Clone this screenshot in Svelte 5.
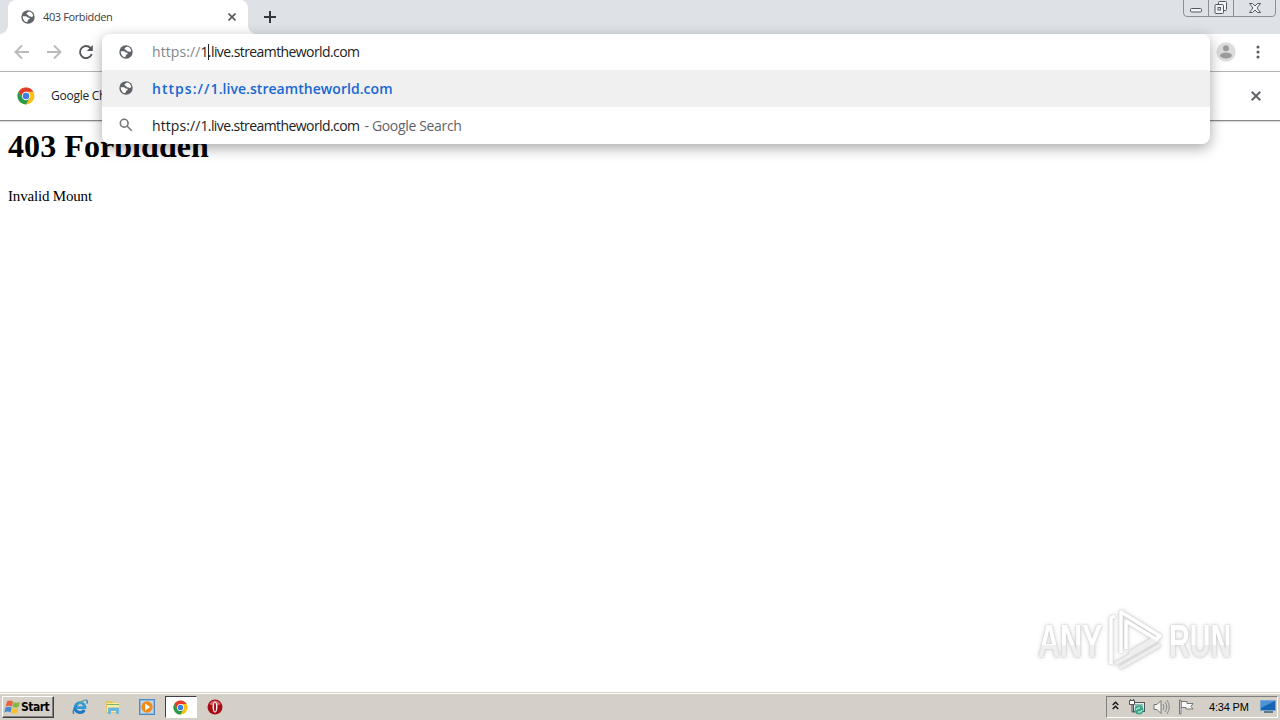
<script lang="ts">
  let url = '1.live.streamtheworld.com';
  let tabTitle = '403 Forbidden';
  let clock = '4:34 PM';
</script>

{#snippet globe()}
  <svg class="globe" viewBox="0 0 14 14">
    <circle cx="7" cy="7" r="6.7" fill="#5f6368" />
    <path d="M7.600 1.700 5.600 3.200l.1 1.300 1.500.3.600 1.500h1.400l1 .8 1.700-.5.3-1.300c-.5-1.700-1.600-3-3.200-3.600zM1.700 6.200l3.500.1 1.500 1.100 1.700.3.400 1.200-1.700.9-.4 1.800-1.600.6C3.200 11.300 1.700 9 1.700 6.200z" fill="#fff" />
  </svg>
{/snippet}

{#snippet chrome()}
  <svg class="chrome" viewBox="0 0 18 18">
    <circle cx="9" cy="9" r="8.500" fill="#fbc116" />
    <path d="M1.600 4.800A8.500 8.500 0 0 1 16.400 4.800H9L5.400 11.100z" fill="#e33b2e" />
    <path d="M1.600 4.800A8.500 8.500 0 0 0 9 17.500l3.600-6.400H5.400z" fill="#269b4b" />
    <circle cx="9" cy="9" r="4.200" fill="#fff" />
    <circle cx="9" cy="9" r="3.300" fill="#3f7de0" />
  </svg>
{/snippet}

<div class="screen">
  <header class="tabstrip">
    <div class="tab">
      {@render globe()}
      <span class="tab-title">{tabTitle}</span>
      <svg class="tab-close" viewBox="0 0 8 8"><path d="m.5.5 7 7m0-7-7 7" /></svg>
    </div>
    <svg class="new-tab" viewBox="0 0 12 12"><path d="M6 0v12M0 6h12" /></svg>
    <div class="window-buttons">
      <span><svg width="14" height="14" viewBox="0 0 14 14"><rect x="1.500" y="7.500" width="11" height="3.500" rx="1" /></svg></span>
      <span><svg width="14" height="14" viewBox="0 0 14 14"><path d="M4.500 3.500v-2q0-1 1-1h6q1 0 1 1v7q0 1-1 1h-2" /><rect x="1" y="3.500" width="8.500" height="9" rx="1" /><rect x="4" y="6.500" width="2.500" height="2.500" /></svg></span>
      <span><svg width="14" height="14" viewBox="0 0 14 14"><path d="M1.500 2.500h3L7 5l2.500-2.500h3L9 7l3.500 4.500h-3L7 9l-2.500 2.500h-3L5 7z" /></svg></span>
    </div>
  </header>

  <nav class="toolbar">
    <svg class="nav dim" viewBox="0 0 16 16"><path d="M15 8H2M8 1.500 1.500 8 8 14.500" /></svg>
    <svg class="nav dim" viewBox="0 0 16 16"><path d="M1 8h13M8 1.500 14.500 8 8 14.500" /></svg>
    <svg class="nav" viewBox="0 0 16 16"><path d="M13.700 10A6 6 0 1 1 12.600 4.200" /><path d="M14.800 1v6H8.800z" class="solid" /></svg>
    <div class="toolbar-end">
      <svg class="avatar" viewBox="0 0 20 20">
        <circle cx="10" cy="10" r="9.700" fill="#dcdcdc" />
        <circle cx="10" cy="6.200" r="3" fill="#9b9b9b" />
        <ellipse cx="10" cy="13.500" rx="6" ry="2.900" fill="#9b9b9b" />
      </svg>
      <svg class="dots" viewBox="0 0 4 14"><circle cx="2" cy="2" r="1.500" /><circle cx="2" cy="7" r="1.500" /><circle cx="2" cy="12" r="1.500" /></svg>
    </div>
  </nav>

  <div class="infobar">
    {@render chrome()}
    <span>Google Chrome</span>
    <svg class="info-close" viewBox="0 0 10 10"><path d="m.7.700 8.600 8.600m0-8.600L.7 9.300" /></svg>
  </div>

  <main>
    <h1>403 Forbidden</h1>
    <p>Invalid Mount</p>
  </main>

  <footer class="taskbar">
    <div class="start">
      <svg width="17" height="17" viewBox="0 0 17 16">
        <path d="M3 2q3-2 6 0L8 7Q5 5.500 1.700 7z" fill="#e8623a" />
        <path d="M9.700 2.400q3 1.500 6.300 0L14.600 7.500q-3 1.400-6 0z" fill="#85b840" />
        <path d="M1.500 8q3-1.500 6.200 0l-1.200 5q-3-1.800-6.200 0z" fill="#4489cf" />
        <path d="M8.400 8.400q3 1.500 6 0L13 13.500q-3 1.500-6 0z" fill="#f6bf34" />
      </svg>
      <b>Start</b>
    </div>
    <div class="launch">
      <span class="app"><svg width="16" height="16" viewBox="0 0 16 16">
        <path d="M3 8.700a5 5 0 0 0 9.300 2.300" fill="none" stroke="#1c78c8" stroke-width="3" />
        <path d="M3 8.700a5 5 0 0 1 10 0z" fill="none" stroke="#2b9be0" stroke-width="2.800" />
        <path d="M2 15Q-.5 12.500 4.500 7 11 .2 14.500 1.200q1.500.800.2 3.600" fill="none" stroke="#2f7fc0" stroke-width="1.300" />
        <path d="M5 6.500Q11 .8 14 1.500" fill="none" stroke="#9bc84a" stroke-width=".8" />
      </svg></span>
      <span class="app"><svg width="16" height="16" viewBox="0 0 16 16">
        <path d="M1 2h6l1 1.500h6V14H1z" fill="#e9c65c" /><path d="M2 4h12v9H2z" fill="#fbec9e" />
        <path d="M2 5.500h12" stroke="#72b576" /><path d="M3 15V9.500q0-1 1-1h9q1 0 1 1V15h-3v-3H6v3z" fill="#69b7dd" />
      </svg></span>
      <span class="app"><svg width="16" height="16" viewBox="0 0 16 16">
        <rect x=".5" y=".5" width="15" height="15" fill="#8ebbe1" stroke="#4d89c4" /><path d="M2 2h12v12H2z" fill="#c4d8e6" />
        <circle cx="8" cy="8" r="5.700" fill="#f18a18" /><path d="m6.200 4.500 5 3.500-5 3.500z" fill="#fff" />
      </svg></span>
      <span class="app active">{@render chrome()}</span>
      <span class="app"><svg width="16" height="16" viewBox="0 0 16 16">
        <circle cx="8" cy="8" r="7.500" fill="#a50c14" /><path d="M2 5q6-7 12 0Q8 8 2 5z" fill="#d66565" />
        <ellipse cx="8" cy="8" rx="2.500" ry="5.500" fill="#f6eded" /><ellipse cx="8" cy="8" rx="1" ry="4.500" fill="#a50c14" />
      </svg></span>
    </div>
    <div class="tray">
      <svg class="chevrons" width="7" height="9" viewBox="0 0 7 9"><path d="m.7 4 2.800-2.800L6.300 4M.7 8l2.800-2.800L6.300 8" fill="none" stroke="#111" stroke-width="1.400" /></svg>
      <svg class="network" width="16" height="16" viewBox="0 0 16 16">
        <rect x="4.500" y="3.500" width="11" height="9" fill="#e5eeee" stroke="#555" /><path d="M6 5h8v6H6z" fill="#8bb9b4" />
        <path d="M.5 1.500h5v4h-5z" fill="#fff" stroke="#555" /><path d="M1.500 0v2m3-2v2M3 5.500V13h3" fill="none" stroke="#555" />
        <circle cx="10" cy="11" r="4.500" fill="#39a88c" /><path d="M7 11q1-3 4-2m2 2q-1 3-4 2" stroke="#e0fff2" fill="none" />
      </svg>
      <svg width="17" height="16" viewBox="0 0 17 16">
        <path d="M1 5.500h3l4-4v13l-4-4H1z" fill="#f4f4f1" stroke="#777" />
        <path d="M10 5q2 3 0 6m2-8q3.500 5 0 10m2-12q4.500 7 0 14" fill="none" stroke="#888" />
      </svg>
      <svg width="16" height="16" viewBox="0 0 16 16"><path d="M3 2.500h6v2h6l-2 3 2 2.500H8V8.500H3z" fill="#f9f9f7" stroke="#777" /><path d="M1.500 1v14h1.500V1z" fill="#fff" stroke="#777" /></svg>
      <time>{clock}</time>
      <svg class="desktop" width="16" height="14" viewBox="0 0 16 14"><path d="M.5.500h15v10H.5z" fill="#1764b5" stroke="#79a7d5" /><path d="M1 1h14L1 8z" fill="#4c94d6" /><path d="M4 11h9v2H4z" fill="#64788a" /></svg>
    </div>
  </footer>

  <section class="omnibox">
    <div class="row input">
      {@render globe()}
      <div class="address"><span class="scheme">https://</span>1<i class="caret"></i>{url.slice(1)}</div>
    </div>
    <div class="row selected">
      {@render globe()}
      <b><span class="prefix">https://</span>{url}</b>
    </div>
    <div class="row search">
      <svg class="magnifier" viewBox="0 0 14 14"><circle cx="5.200" cy="5.200" r="3.900" /><path d="m8.200 8.200 4.600 4.600" /></svg>
      <span><span class="prefix">https://</span>{url}</span><span class="hint">- Google Search</span>
    </div>
  </section>

  <div class="watermark">
    <span>ANY</span>
    <svg width="57" height="62" viewBox="0 0 57 62">
      <path class="shade" d="M8 55l44-25M13 59l40-23M22 44l24-14" />
      <path d="M4 55V9l4-2M14 44V3l39 24-4 3-30-18v28" />
    </svg>
    <span class="run">RUN</span>
  </div>
</div>

<style>
  :global(body) { background: #fff; overflow: hidden; }
  .screen {
    position: relative;
    width: 1280px; height: 720px;
    display: flex; flex-direction: column;
    overflow: hidden;
    font-family: 'Open Sans', 'Noto Sans', sans-serif;
    color: #202124;
  }
  svg { display: block; flex-shrink: 0; }
  .globe { width: 14px; height: 14px; }
  .chrome { width: 18px; height: 18px; }

  .tabstrip { height: 34px; display: flex; align-items: flex-start; background: #dee1e6; }
  .tab {
    position: relative;
    width: 240px; height: 34px; margin-left: 8px; padding: 0 12px 0 13px;
    display: flex; align-items: center;
    box-sizing: border-box;
    background: #fff; border-radius: 8px 8px 0 0;
  }
  .tab::before, .tab::after { content: ''; position: absolute; bottom: 0; width: 8px; height: 8px; }
  .tab::before { left: -8px; background: radial-gradient(circle at 0 0, transparent 7.500px, #fff 8px); }
  .tab::after { right: -8px; background: radial-gradient(circle at 100% 0, transparent 7.500px, #fff 8px); }
  .tab-title { margin: 0 0 2px 8px; font-size: 11px; letter-spacing: -.38px; white-space: nowrap; color: #3c4043; }
  .tab-close { width: 8px; height: 8px; margin-left: auto; stroke: #55585c; stroke-width: 1.600; }
  .new-tab { width: 12px; height: 12px; margin: 11px 0 0 16px; stroke: #35383c; stroke-width: 2; }
  .window-buttons {
    height: 16px; margin: -1px 4px 0 auto;
    display: flex;
    border: 1px solid #8b9098; border-radius: 0 0 4px 4px;
  }
  .window-buttons span { width: 24px; display: flex; align-items: center; justify-content: center; border-right: 1px solid #8b9098; }
  .window-buttons span:last-child { width: 41px; border: 0; }
  .window-buttons svg { fill: #f2f4f7; stroke: #535860; stroke-width: 1; }

  .toolbar { height: 36px; padding: 0 20px 1px 14px; display: flex; align-items: center; gap: 16px; border-bottom: 1px solid #b3b3b3; }
  .nav { width: 16px; height: 16px; fill: none; stroke: #55585c; stroke-width: 1.900; }
  .dim { stroke: #b8babc; }
  .solid { fill: #55585c; stroke: none; }
  .toolbar-end { margin-left: auto; display: flex; align-items: center; gap: 20px; }
  .avatar { width: 20px; height: 20px; }
  .dots { width: 4px; height: 14px; fill: #55585c; }

  .infobar {
    height: 49px; padding: 0 19px 0 17px;
    display: flex; align-items: center;
    box-sizing: border-box;
    border-bottom: 1px solid #898989; box-shadow: 0 1px 1px #ddd;
    font-size: 12px; letter-spacing: -.25px;
  }
  .infobar span { margin: 0 0 1px 16px; }
  .info-close { width: 10px; height: 10px; margin-left: auto; stroke: #5f6368; stroke-width: 2; }

  main { flex: 1; padding: 0 8px; font-family: 'Liberation Serif', serif; color: #000; }
  h1 { margin: 7px 0 0; font-size: 32px; line-height: 37px; letter-spacing: .07px; }
  p { margin: 22px 0 0; font-size: 15px; line-height: 18px; letter-spacing: -.18px; }

  .taskbar {
    height: 28px; padding: 3px 2px 2px;
    display: flex; align-items: stretch;
    box-sizing: border-box;
    background: #d4d0c8; border-top: 1px solid #d4d0c8; box-shadow: inset 0 1px #fff;
  }
  .start {
    width: 52px; padding-left: 1px;
    display: flex; align-items: center;
    box-sizing: border-box;
    border: 1px solid; border-color: #fff #404040 #404040 #fff;
    box-shadow: inset -1px -1px #808080;
    color: #000; font: 700 12px 'DejaVu Sans Condensed', sans-serif;
  }
  .start b { letter-spacing: -.5px; }
  .launch { margin-left: 9px; display: flex; }
  .app { width: 33.600px; display: flex; align-items: center; justify-content: center; }
  .app.active {
    width: 32px; margin: 0 1px;
    box-sizing: border-box;
    border: 1px solid; border-color: #404040 #fff #fff #404040;
    background: #fff;
  }
  .app .chrome { width: 15px; height: 15px; }
  .tray {
    width: 172px; margin-left: auto; padding: 0 1px 0 5px;
    display: flex; align-items: center; gap: 8px;
    box-sizing: border-box;
    border: 1px solid; border-color: #808080 #fff #fff #808080;
    color: #000; font: 11px 'Liberation Sans', sans-serif;
  }
  .chevrons { margin-bottom: 3px; }
  .network { margin-left: 2px; }
  .tray time { margin-left: 7px; white-space: nowrap; letter-spacing: -.18px; }
  .desktop { margin-left: auto; }

  .omnibox {
    position: absolute; left: 102px; top: 34px;
    width: 1108px; height: 110px;
    background: #fff; border-radius: 8px; overflow: hidden;
    box-shadow: 0 4px 14px rgba(0,0,0,.35);
    font-size: 14px;
  }
  .row { height: 37px; padding-left: 17px; display: flex; align-items: center; white-space: nowrap; }
  .row > :nth-child(2) { margin-left: 19px; }
  .input { height: 36px; }
  .address, .search { letter-spacing: -.58px; }
  .address { margin-bottom: 1px; }
  .scheme, .prefix { letter-spacing: .08px; }
  .scheme { color: #80868b; }
  .caret { display: inline-block; width: 1px; height: 16px; margin-right: -1px; vertical-align: -3px; background: #222; }
  .selected { background: #f0f0f0; color: #1967d2; }
  .selected .globe { margin-bottom: 2px; }
  .selected b { font-weight: 600; letter-spacing: .05px; }
  .selected .prefix { letter-spacing: 1.040px; }
  .magnifier { width: 14px; height: 14px; margin-bottom: 1px; fill: none; stroke: #747679; stroke-width: 1.600; }
  .hint { margin-left: 5px; color: #5f6368; letter-spacing: -.34px; }

  .watermark {
    position: absolute; left: 1038px; top: 609px;
    height: 62px;
    display: flex; align-items: center; gap: 5px;
    color: #fff; font: 700 47px 'Liberation Sans', sans-serif;
    filter: drop-shadow(0 0 1px #c4c4c4) drop-shadow(0 0 2px #ddd);
  }
  .watermark span {
    width: 104px; margin-right: -40px; transform: scaleX(.65); transform-origin: left; white-space: nowrap;
    background: linear-gradient(#fff 58%, #efefef 58%); background-clip: text; color: transparent;
  }
  .watermark .run { transform: scaleX(.61); }
  .watermark svg { fill: none; stroke: #fff; stroke-width: 3.500; stroke-linejoin: round; }
  .watermark .shade { stroke: #eee; }
</style>
